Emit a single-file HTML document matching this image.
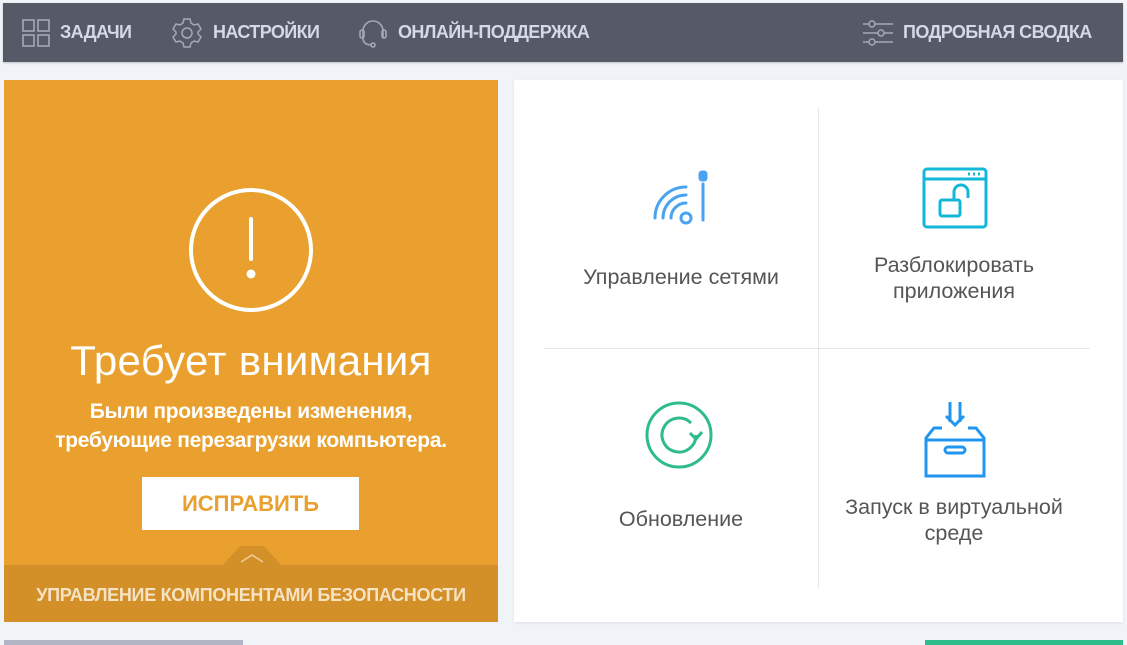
<!DOCTYPE html>
<html><head><meta charset="utf-8"><style>
*{margin:0;padding:0;box-sizing:border-box}
body{width:1127px;height:645px;background:#f0f4f8;position:relative;overflow:hidden;font-family:"Liberation Sans",sans-serif}
.top{position:absolute;left:3px;top:3px;width:1120px;height:59px;background:#565a66;box-shadow:0 1px 2px rgba(0,0,0,.2)}
.nav{position:absolute;top:0;height:59px;display:flex;align-items:center;color:#d4d9e6;font-weight:bold;font-size:18px;letter-spacing:-0.6px}
.nav svg{margin-right:10px}
.or{position:absolute;left:4px;top:80px;width:494px;height:542px;background:#e9a02e}
.band{position:absolute;left:0;bottom:0;width:494px;height:57px;background:#d38f28;color:#f6e3c4;font-weight:bold;font-size:18px;text-align:center;line-height:60px;letter-spacing:-0.3px}
.wh{position:absolute;left:514px;top:80px;width:609px;height:542px;background:#fff;box-shadow:0 1px 3px rgba(0,0,0,.08)}
.lbl{position:absolute;color:#555;font-size:21.5px;text-align:center;line-height:26px}
</style></head><body>
<div class="top">
 <div class="nav" style="left:19px"><svg width="28" height="28" viewBox="0 0 28 28" fill="none" stroke="#a4a9b6" stroke-width="1.6"><rect x="1" y="1" width="11" height="11"/><rect x="16" y="1" width="11" height="11"/><rect x="1" y="16" width="11" height="11"/><rect x="16" y="16" width="11" height="11"/></svg>ЗАДАЧИ</div>
 <div class="nav" style="left:168px"><svg width="32" height="32" viewBox="0 0 32 32" fill="none" stroke="#a4a9b6" stroke-width="1.5"><path d="M13 2h6l1 4 3 2 4-1 3 5-3 3v2l3 3-3 5-4-1-3 2-1 4h-6l-1-4-3-2-4 1-3-5 3-3v-2l-3-3 3-5 4 1 3-2z"/><circle cx="16" cy="16" r="5"/></svg>НАСТРОЙКИ</div>
 <div class="nav" style="left:355px"><svg width="30" height="32" viewBox="0 0 30 32" fill="none" stroke="#a4a9b6" stroke-width="1.6"><path d="M5 20V14a10 10 0 0 1 20 0v6"/><rect x="2" y="13" width="4" height="8" rx="2"/><rect x="24" y="13" width="4" height="8" rx="2"/><path d="M5 21q0 7 9 7"/><circle cx="15" cy="28" r="2"/></svg>ОНЛАЙН-ПОДДЕРЖКА</div>
 <div class="nav" style="left:858px"><svg width="32" height="28" viewBox="0 0 32 28" fill="none" stroke="#a4a9b6" stroke-width="1.5"><path d="M2 5h30M2 14h30M2 23h30"/><circle cx="11" cy="5" r="3" fill="#565a66"/><circle cx="20" cy="14" r="3" fill="#565a66"/><circle cx="11" cy="23" r="3" fill="#565a66"/></svg>ПОДРОБНАЯ СВОДКА</div>
</div>
<div class="or">
 <svg style="position:absolute;left:184px;top:107px" width="126" height="126" viewBox="0 0 126 126" fill="none" stroke="#fff" stroke-width="4"><circle cx="63" cy="63" r="60"/><path d="M63 32v40" stroke-linecap="round"/><circle cx="63" cy="87" r="2.5" fill="#fff"/></svg>
 <div style="position:absolute;left:0;width:494px;top:257px;text-align:center;color:#fff;font-size:42px;font-weight:300;letter-spacing:0.3px">Требует внимания</div>
 <div style="position:absolute;left:0;width:494px;top:317px;text-align:center;color:#fff;font-size:21px;font-weight:bold;line-height:29px;letter-spacing:-0.3px">Были произведены изменения,<br>требующие перезагрузки компьютера.</div>
 <div style="position:absolute;left:138px;top:397px;width:217px;height:53px;background:#fff;color:#e9a02e;font-weight:bold;font-size:22px;text-align:center;line-height:53px">ИСПРАВИТЬ</div>
 <div style="position:absolute;left:218px;top:466px;width:60px;height:20px;background:#d38f28;clip-path:polygon(30% 0,70% 0,100% 100%,0 100%)"></div>
 <svg style="position:absolute;left:236px;top:473px" width="24" height="10" viewBox="0 0 24 10" fill="none" stroke="#f0cf9c" stroke-width="1.5"><path d="M1 9L12 2l11 7"/></svg>
 <div class="band">УПРАВЛЕНИЕ КОМПОНЕНТАМИ БЕЗОПАСНОСТИ</div>
</div>
<div class="wh">
 <div style="position:absolute;left:304px;top:28px;width:1px;height:480px;background:#e4e7ea"></div>
 <div style="position:absolute;left:30px;top:268px;width:546px;height:1px;background:#e4e7ea"></div>
 <svg style="position:absolute;left:135px;top:88px" width="62" height="58" viewBox="0 0 62 58" fill="none" stroke="#4aa3f0" stroke-width="3" stroke-linecap="round"><circle cx="37" cy="50" r="5"/><path d="M22 50a15 15 0 0 1 15-15"/><path d="M14 50a23 23 0 0 1 23-23"/><path d="M6 50a31 31 0 0 1 31-31"/><path d="M54 16v36"/><rect x="51" y="4" width="6" height="8" rx="2" fill="#4aa3f0"/></svg>
 <svg style="position:absolute;left:408px;top:87px" width="66" height="62" viewBox="0 0 66 62" fill="none" stroke="#13b8d8" stroke-width="3"><rect x="2" y="2" width="62" height="58" rx="3"/><path d="M2 12h62"/><path d="M46 7h2M51 7h2M56 7h2"/><rect x="18" y="33" width="20" height="16" rx="2"/><path d="M32 33v-8a7 7 0 0 1 14 0v6"/></svg>
 <svg style="position:absolute;left:130px;top:320px" width="70" height="70" viewBox="0 0 70 70" fill="none" stroke="#2ebd8a" stroke-width="3"><circle cx="35" cy="35" r="32"/><path d="M52 35a17 17 0 1 1-5-12"/><path d="M46 33l6 6 6-7"/></svg>
 <svg style="position:absolute;left:408px;top:320px" width="66" height="78" viewBox="0 0 66 78" fill="none" stroke="#2196f0" stroke-width="3"><path d="M28 2v20M38 2v20M24 16l9 9 9-9"/><path d="M20 28h-8l-8 10v38h58V38l-8-10h-8"/><path d="M4 40h58"/><rect x="23" y="47" width="20" height="6" rx="3"/></svg>
 <div class="lbl" style="left:30px;width:274px;top:184px">Управление сетями</div>
 <div class="lbl" style="left:305px;width:270px;top:172px">Разблокировать<br>приложения</div>
 <div class="lbl" style="left:30px;width:274px;top:426px">Обновление</div>
 <div class="lbl" style="left:305px;width:270px;top:414px">Запуск в виртуальной<br>среде</div>
</div>
<div style="position:absolute;left:4px;top:640px;width:239px;height:5px;background:#b2b6c4"></div>
<div style="position:absolute;left:925px;top:640px;width:198px;height:5px;background:#2ebd8a"></div>
</body></html>
